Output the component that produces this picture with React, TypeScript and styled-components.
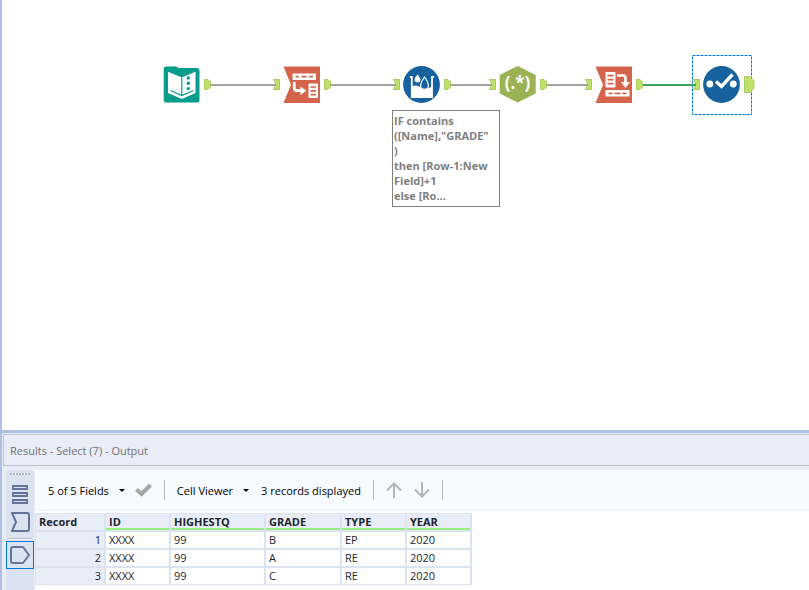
import React from "react";
import styled, { createGlobalStyle } from "styled-components";

const GlobalStyle = createGlobalStyle`
  * { box-sizing: border-box; }
  body { margin: 0; background: #fff; }
  button { font: inherit; color: inherit; background: none; border: 0; padding: 0; margin: 0; }
`;

const Shell = styled.div`
  display: flex;
  flex-direction: column;
  min-height: 100vh;
  border-left: 2px solid #b0bfe4;
  font-family: "Open Sans", "Noto Sans", sans-serif;
  font-size: 11px;
  color: #000;
`;

const Canvas = styled.main`
  position: relative;
  flex: 1;
  min-height: 240px;
  overflow: hidden;
  background: #fff;
  border-bottom: 3px solid #b0bfe4;
`;

const Wires = styled.svg`
  position: absolute;
  left: 0;
  top: 0;
  width: 100%;
  height: 100%;
  pointer-events: none;
`;

const Tool = styled.button<{ $x: number }>`
  position: absolute;
  left: ${(p) => p.$x}px;
  top: 55px;
  width: 64px;
  height: 60px;
  svg { display: block; overflow: visible; }
`;

const Note = styled.div`
  position: absolute;
  left: 390px;
  top: 110px;
  width: 108px;
  padding: 2px 1px 3px;
  border: 1px solid #808080;
  background: #fff;
  color: #808080;
  font-weight: 700;
  line-height: 15px;
  white-space: pre-line;
`;

const Results = styled.section`
  background: #e9edf8;
`;

const Title = styled.h2`
  margin: 1px 0 0 1px;
  padding: 0 6px;
  height: 32px;
  line-height: 31px;
  font-size: 11px;
  font-weight: 400;
  color: #707070;
  background: #e9edf8;
  border: 1px solid #bfc3cc;
  border-right: 0;
`;

const Body = styled.div`
  display: flex;
  padding: 4px 0 0 4px;
`;

const Rail = styled.nav`
  display: flex;
  flex-direction: column;
  width: 28px;
  flex: none;
  background: #dbe2f0;
  border-radius: 4px 4px 0 0;
`;

const Grip = styled.div`
  height: 2px;
  margin: 3px 4px 5px;
  background: repeating-linear-gradient(90deg, #b4b8c0 0 2px, #f4f6fa 2px 3px);
`;

const RailButton = styled.button<{ $active?: boolean }>`
  display: flex;
  align-items: center;
  justify-content: center;
  height: 28px;
  border: 1px solid ${(p) => (p.$active ? "#0078d7" : "transparent")};
`;

const RailRule = styled.div`
  height: 2px;
  margin: 2px 2px 1px;
  background: #c2c5cc;
  border-bottom: 1px solid #f2f4f9;
`;

const Main = styled.div`
  flex: 1;
  min-width: 0;
  margin-left: 1px;
  background: #fff;
`;

const Toolbar = styled.div`
  display: flex;
  align-items: center;
  height: 41px;
  margin-bottom: 2px;
  padding-left: 13px;
  background: #f7faff;
  border-bottom: 1px solid #eef0f5;
  border-radius: 4px 0 0 4px;
  white-space: nowrap;
`;

const DropButton = styled.button`
  display: flex;
  align-items: center;
  gap: 10px;
  &::after {
    content: "";
    border: 3px solid transparent;
    border-top-color: #000;
    border-bottom: 0;
  }
`;

const IconButton = styled.button`
  display: flex;
  margin-left: 10px;
`;

const ArrowButton = styled.button`
  display: flex;
  & + & { margin-left: 12px; }
`;

const Divider = styled.span`
  width: 1px;
  height: 20px;
  margin: 0 12px;
  background: #b5b8bd;
`;

const Count = styled.span`
  margin-left: 12px;
`;

const Grid = styled.table`
  border-collapse: separate;
  border-spacing: 0;
  table-layout: fixed;
  width: 437px;
  margin-bottom: 5px;
  color: #202630;
  border-top: 1px solid #dbe2f0;
  border-left: 1px solid #dbe2f0;
`;

const Col = styled.col<{ $w: number }>`
  width: ${(p) => p.$w}px;
`;

const Head = styled.th<{ $plain?: boolean }>`
  height: 18px;
  padding: 0 3px;
  line-height: 14px;
  text-align: left;
  background: #e9edf8;
  border-right: 2px solid #dbe2f0;
  border-bottom: 2px solid #dbe2f0;
  box-shadow: ${(p) => (p.$plain ? "none" : "inset 0 -2px 0 #98f080")};
`;

const Cell = styled.td<{ $record?: boolean }>`
  height: 18px;
  padding: 0 3px;
  line-height: 16px;
  text-align: ${(p) => (p.$record ? "right" : "left")};
  background: ${(p) => (p.$record ? "#e9edf8" : "#fff")};
  border-right: 2px solid #dbe2f0;
  border-bottom: 2px solid #dbe2f0;
  tr:last-child > & {
    height: 17px;
    border-bottom-width: 1px;
  }
`;

const Anchor = { fill: "#bfe069", stroke: "#a8ca60", strokeWidth: 1 };

const InAnchor = () => <path d="M1.500 24.500H7.500V34.500H1.500L4 29.500Z" {...Anchor} />;
const OutAnchor = ({ big }: { big?: boolean }) =>
  big ? (
    <path d="M52.500 21.500H58L62 26V33L58 37.500H52.500Z" {...Anchor} />
  ) : (
    <path d="M52.500 24.500H56L58.500 27V32L56 34.500H52.500Z" {...Anchor} />
  );

const InputIcon = () => (
  <g transform="translate(12 12)">
    <path d="M2 -0.500H12.500L14.500 1H33.500Q35.500 1 35.500 3.500V33.500Q35.500 35.500 33.500 35.500H2Q-0.300 35.500 -0.300 33.500V2Q-0.300 -0.500 2 -0.500Z" fill="#089c8c" />
    <path d="M4 4.800L17.800 10.500L31.500 4.800V26L17.800 32L4 26Z" fill="#fff" />
    <path d="M17.800 10.500V28M6.500 23.500L17.800 28.500L29.500 23.500" fill="none" stroke="#089c8c" strokeWidth="1.200" />
    <g fill="#089c8c">
      <circle cx="24.300" cy="11" r="1.700" />
      <circle cx="24.300" cy="16.300" r="1.700" />
      <circle cx="24.300" cy="21.600" r="1.700" />
    </g>
  </g>
);

const Flag = () => <path d="M0 0H36.500V36.500H0L7.500 18.200Z" fill="#d5644c" />;

const TransposeIcon = () => (
  <g transform="translate(11.500 11.500)">
    <Flag />
    <rect x="9" y="7" width="23.500" height="6.500" rx="0.800" fill="#fff" />
    <path d="M12 10.200H15.500M18 10.200H23M25.500 10.200H29.500" stroke="#d5644c" strokeWidth="1.800" />
    <path d="M10.800 15.500V21.500Q10.800 24 13.300 24H17.500" fill="none" stroke="#fff" strokeWidth="2.800" />
    <path d="M17 20L22.800 24.200L17 28.400Z" fill="#fff" />
    <rect x="25" y="17" width="9.500" height="14.500" rx="0.800" fill="#fff" />
    <path d="M27 20.500H32.500M27 24.300H32.500M27 28.100H32.500" stroke="#d5644c" strokeWidth="1.700" />
  </g>
);

const CrossTabIcon = () => (
  <g transform="translate(11.500 11.500)">
    <Flag />
    <rect x="10" y="5.500" width="10" height="15.500" rx="0.800" fill="#fff" />
    <path d="M12 9.200H18M12 13.200H18M12 17.200H18" stroke="#d5644c" strokeWidth="1.700" />
    <path d="M21.500 9H27.500Q30 9 30 11.500V16" fill="none" stroke="#fff" strokeWidth="2.600" />
    <path d="M25.500 15.500H34.500L30 21.500Z" fill="#fff" />
    <rect x="10" y="23.500" width="24" height="6.500" rx="0.800" fill="#fff" />
    <path d="M13 26.800H17M19 26.800H25M27 26.800H31" stroke="#d5644c" strokeWidth="1.700" />
  </g>
);

const MultiRowIcon = () => (
  <g transform="translate(11 11)">
    <circle cx="18.500" cy="18.500" r="18.400" fill="#17619f" />
    <path d="M6.800 11H8.800V31H29V11H31" fill="none" stroke="#fff" strokeWidth="1.800" />
    <path d="M9 20.500Q12.500 18.500 16 20.500Q21.500 25 29 20.500V31H9Z" fill="#fff" />
    <path d="M14.500 8.500Q18.800 13.300 16.900 15.500Q14.500 17.500 12.100 15.500Q10.200 13.300 14.500 8.500Z" fill="#fff" />
    <path d="M21.500 11Q27 18.500 24.800 22Q21.500 25 18.200 22Q16 18.500 21.500 11Z" fill="#17619f" stroke="#fff" strokeWidth="1.200" />
  </g>
);

const RegexGlyph = styled.text`
  font: 700 17px "Open Sans", sans-serif;
  fill: #fff;
  text-anchor: middle;
`;

const RegexIcon = () => (
  <g transform="translate(11.500 11)">
    <path d="M18.200 0L36.200 9V27.500L18.200 36.500L0.200 27.500V9Z" fill="#9bb255" />
    <RegexGlyph x="18" y="23">(.*)</RegexGlyph>
  </g>
);

const SelectIcon = () => (
  <g transform="translate(11 11)">
    <circle cx="18.500" cy="18.500" r="18.400" fill="#17619f" />
    <circle cx="6.800" cy="18" r="3.400" fill="#fff" />
    <circle cx="30.300" cy="18" r="3.400" fill="#fff" />
    <path d="M13 15.500L18.500 20.300L29.500 8.500" fill="none" stroke="#fff" strokeWidth="3.400" />
  </g>
);

const tools = [
  { name: "Text Input", x: 150, Icon: InputIcon, source: true },
  { name: "Transpose", x: 270, Icon: TransposeIcon },
  { name: "Multi-Row Formula", x: 390, Icon: MultiRowIcon },
  { name: "RegEx", x: 486, Icon: RegexIcon },
  { name: "Cross Tab", x: 582, Icon: CrossTabIcon },
  { name: "Select", x: 690, Icon: SelectIcon, selected: true },
];

const columns = ["ID", "HIGHESTQ", "GRADE", "TYPE", "YEAR"];
const widths = [70, 65, 95, 76, 65, 65];
const rows = [
  ["XXXX", "99", "B", "EP", "2020"],
  ["XXXX", "99", "A", "RE", "2020"],
  ["XXXX", "99", "C", "RE", "2020"],
];

export default function App() {
  return (
    <Shell>
      <GlobalStyle />
      <Canvas>
        {tools.map(({ name, x, Icon, source, selected }) => (
          <Tool key={name} type="button" aria-label={name} $x={x}>
            <svg width="64" height="60" aria-hidden="true">
              {selected && (
                <rect x="0.500" y="0.500" width="59" height="59" fill="#fff" stroke="#0078d7" strokeDasharray="3 1" />
              )}
              {!source && <InAnchor />}
              <Icon />
              <OutAnchor big={selected} />
            </svg>
          </Tool>
        ))}
        <Wires aria-hidden="true">
          {tools.slice(1).map((t, i) => (
            <path
              key={t.name}
              d={`M${tools[i].x + 59} 85H${t.x + 4}`}
              stroke={t.selected ? "#3da35d" : "#a5a5a5"}
              strokeWidth="2"
            />
          ))}
        </Wires>
        <Note>{'IF contains\n([Name],"GRADE"\n)\nthen [Row-1:New\nField]+1\nelse [Ro...'}</Note>
      </Canvas>
      <Results>
        <Title>Results - Select (7) - Output</Title>
        <Body>
          <Rail aria-label="Result views">
            <Grip />
            <RailButton type="button" aria-label="Messages">
              <svg width="18" height="20" fill="none" stroke="#64739a" strokeWidth="2">
                <path d="M2 2H16V5H2ZM2 9H16V12H2ZM2 16H16V19H2Z" />
              </svg>
            </RailButton>
            <RailButton type="button" aria-label="Input data">
              <svg width="20" height="20" fill="none" stroke="#64739a" strokeWidth="2" strokeLinejoin="round">
                <path d="M2 1H17Q19 1 19 3V17Q19 19 17 19H2L6 10Z" />
              </svg>
            </RailButton>
            <RailRule />
            <RailButton type="button" aria-label="Output data" $active>
              <svg width="20" height="20" fill="none" stroke="#64739a" strokeWidth="2" strokeLinejoin="round">
                <path d="M3 2H13L19 10L13 18H3Q1 18 1 16V4Q1 2 3 2Z" />
              </svg>
            </RailButton>
          </Rail>
          <Main>
            <Toolbar>
              <DropButton type="button">5 of 5 Fields</DropButton>
              <IconButton type="button" aria-label="Apply">
                <svg width="17" height="14" fill="none" stroke="#a5a5a5" strokeWidth="4">
                  <path d="M1.500 6.500L6.500 11L15.500 2" />
                </svg>
              </IconButton>
              <Divider />
              <DropButton type="button">Cell Viewer</DropButton>
              <Count>3 records displayed</Count>
              <Divider />
              <ArrowButton type="button" aria-label="Previous">
                <svg width="16" height="16" fill="none" stroke="#b5b5b5" strokeWidth="2">
                  <path d="M8 16V2M1 8.500L8 1.500L15 8.500" />
                </svg>
              </ArrowButton>
              <ArrowButton type="button" aria-label="Next">
                <svg width="16" height="16" fill="none" stroke="#b5b5b5" strokeWidth="2">
                  <path d="M8 0V14M1 7.500L8 14.500L15 7.500" />
                </svg>
              </ArrowButton>
              <Divider />
            </Toolbar>
            <Grid>
              <colgroup>
                {widths.map((w, i) => (
                  <Col key={i} $w={w} />
                ))}
              </colgroup>
              <thead>
                <tr>
                  <Head scope="col" $plain>Record</Head>
                  {columns.map((c) => (
                    <Head key={c} scope="col">{c}</Head>
                  ))}
                </tr>
              </thead>
              <tbody>
                {rows.map((r, i) => (
                  <tr key={i}>
                    <Cell $record>{i + 1}</Cell>
                    {r.map((v, j) => (
                      <Cell key={j}>{v}</Cell>
                    ))}
                  </tr>
                ))}
              </tbody>
            </Grid>
          </Main>
        </Body>
      </Results>
    </Shell>
  );
}
